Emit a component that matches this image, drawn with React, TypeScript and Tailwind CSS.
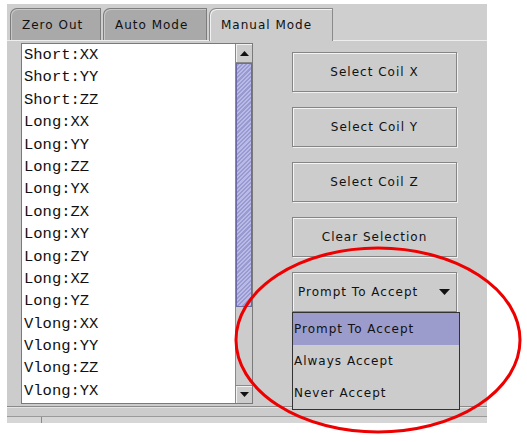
import { useState } from "react";

const coils = [
  "Short:XX",
  "Short:YY",
  "Short:ZZ",
  "Long:XX",
  "Long:YY",
  "Long:ZZ",
  "Long:YX",
  "Long:ZX",
  "Long:XY",
  "Long:ZY",
  "Long:XZ",
  "Long:YZ",
  "Vlong:XX",
  "Vlong:YY",
  "Vlong:ZZ",
  "Vlong:YX",
];

const acceptModes = ["Prompt To Accept", "Always Accept", "Never Accept"];

const uiFont = "font-['DejaVu_Sans',sans-serif] text-[12px] tracking-[1px] text-[#111]";

const Tab = ({ label, active, width }: { label: string; active?: boolean; width: string }) => (
  <div
    className={`${width} h-[32px] flex items-center pl-[11px] rounded-tl-[7px] border border-b-0 ${
      active
        ? "bg-[#cccccc] border-[#8a8a8a] shadow-[inset_1px_1px_0_#f2f2f2] relative top-[1px] h-[33px]"
        : "bg-[#a9a9a9] border-[#7d7d7d] shadow-[inset_1px_1px_0_#c8c8c8]"
    } ${uiFont}`}
  >
    {label}
  </div>
);

const CoilButton = ({ label }: { label: string }) => (
  <button
    className={`h-[40px] w-full border border-[#858585] bg-[#cccccc] shadow-[inset_1px_1px_0_#f4f4f4,1px_1px_0_#f0f0f0] flex items-center justify-center ${uiFont}`}
  >
    {label}
  </button>
);

const Arrow = ({ up }: { up?: boolean }) => (
  <svg width="9" height="5" viewBox="0 0 9 5">
    <path d={up ? "M0 5 L4.5 0 L9 5 Z" : "M0 0 L4.5 5 L9 0 Z"} fill="#111" />
  </svg>
);

const App = () => {
  const [selected, setSelected] = useState<number>(0);

  return (
    <div className="relative w-[527px] h-[442px] bg-white overflow-hidden">
      <div className="ml-[7px] pt-[4px]">
        <div className="w-[480px] h-[419px] bg-[#cccccc] flex flex-col">
          {/* tabs */}
          <div className="h-[36px] flex items-end gap-[2px] pl-[3px] bg-[#cfcfcf]">
            <Tab label="Zero Out" width="w-[91px]" />
            <Tab label="Auto Mode" width="w-[104px]" />
            <Tab label="Manual Mode" width="w-[124px]" active />
          </div>

          {/* tab content */}
          <div className="h-[367px] flex border-t border-t-[#eeeeee] border-b border-b-[#8a8a8a]">
            <div className="ml-[14px] mt-[2px] w-[232px] h-[361px] border border-[#7a7a7a] bg-white flex">
              <div className="flex-1 pl-[2px] font-['Liberation_Mono',monospace] text-[15.5px] text-[#111]">
                {coils.map((c) => (
                  <div key={c} className="h-[22.4px] leading-[22.4px]">
                    {c}
                  </div>
                ))}
              </div>
              <div className="w-[17px] border-l border-[#8a8a8a] bg-[#cccccc] flex flex-col">
                <div className="h-[19px] border-b border-[#8a8a8a] shadow-[inset_1px_1px_0_#f2f2f2] flex items-center justify-center">
                  <Arrow up />
                </div>
                <div className="h-[244px] border border-[#6b6ba8] bg-[repeating-linear-gradient(135deg,#9a9ad2_0px,#9a9ad2_1.5px,#babae6_1.5px,#babae6_3px)]" />
                <div className="flex-1" />
                <div className="h-[18px] border-t border-[#8a8a8a] shadow-[inset_1px_1px_0_#f2f2f2] flex items-center justify-center">
                  <Arrow />
                </div>
              </div>
            </div>

            <div className="ml-[39px] pt-[11px] w-[165px] flex flex-col gap-[15px]">
              <CoilButton label="Select Coil X" />
              <CoilButton label="Select Coil Y" />
              <CoilButton label="Select Coil Z" />
              <CoilButton label="Clear Selection" />
              <div className="relative">
                <div
                  className={`h-[40px] w-full border border-[#858585] bg-[#cccccc] shadow-[inset_1px_1px_0_#f4f4f4,1px_1px_0_#f0f0f0] flex items-center justify-between pl-[5px] pr-[6px] ${uiFont}`}
                >
                  <span>{acceptModes[selected]}</span>
                  <svg width="11" height="6" viewBox="0 0 11 6">
                    <path d="M0 0 L5.5 6 L11 0 Z" fill="#111" />
                  </svg>
                </div>
                <div className="absolute left-0 top-[40px] w-[168px] border border-[#333] bg-[#cccccc] z-10">
                  {acceptModes.map((m, i) => (
                    <div
                      key={m}
                      onClick={() => setSelected(i)}
                      className={`h-[32px] flex items-center pl-[1px] ${uiFont} ${
                        i === selected ? "bg-[#9c9ccc]" : ""
                      }`}
                    >
                      {m}
                    </div>
                  ))}
                </div>
              </div>
            </div>
          </div>

          {/* status strip */}
          <div className="flex-1 flex flex-col">
            <div className="h-[10px] border-t border-t-[#e4e4e4] border-b border-b-[#9a9a9a]" />
            <div className="flex-1 flex bg-[#d6d6d6]">
              <div className="w-[35px] border-r border-[#8a8a8a]" />
            </div>
          </div>
        </div>
      </div>

      {/* annotation */}
      <svg className="absolute left-0 top-0 pointer-events-none" width="527" height="442">
        <ellipse cx="378" cy="340" rx="142" ry="92" fill="none" stroke="#ee0000" strokeWidth="3" />
      </svg>
    </div>
  );
};

export default App;
